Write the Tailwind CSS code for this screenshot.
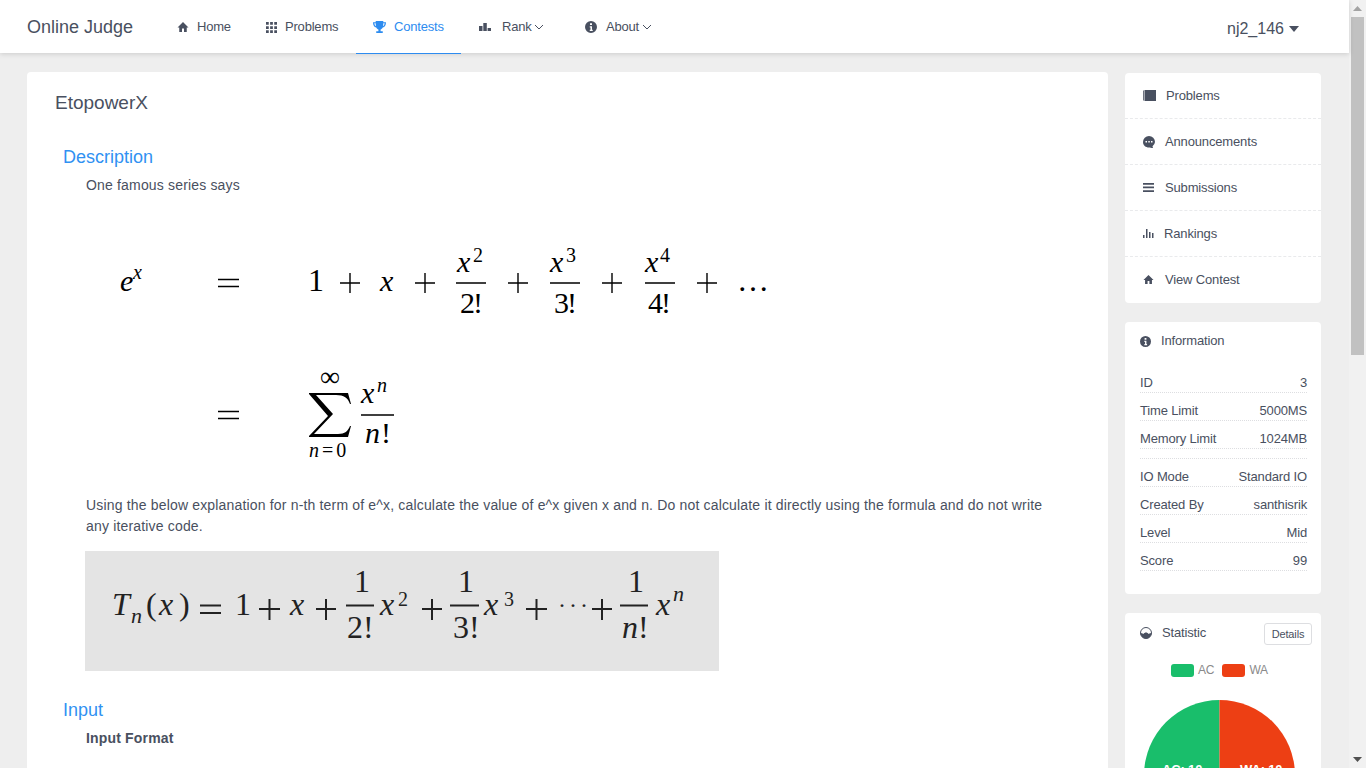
<!DOCTYPE html>
<html lang="en">
<head>
    <meta charset="UTF-8">
    <title>Online Judge</title>
    <script src="https://cdn.jsdelivr.net/npm/@tailwindcss/browser@4"></script>
</head>
<body class="bg-[#eeeeee] text-[#495060] font-['Liberation_Sans',sans-serif] text-[14px]">
<div class="flex h-[768px] w-[1366px] overflow-hidden">
    <div class="w-[1349px] shrink-0">
        <!-- Header -->
        <header class="relative flex h-[53px] items-stretch bg-white pl-[27px] shadow-[0_1px_5px_rgba(0,0,0,0.15)]">
            <div class="w-[129px] text-[18px] leading-[55px]">Online Judge</div>
            <nav class="flex h-[54px] text-[13px] tracking-[-0.2px]">
                <a class="flex w-[102px] items-center pl-[21px]">
                    <svg class="mr-[8px] h-[12px] w-[12px] fill-current" viewBox="0 0 24 24"><path d="M12 2 1 13h3.500v9H10v-7h4v7h5.500v-9H23z"/></svg>
                    <span>Home</span>
                </a>
                <a class="flex w-[98px] items-center pl-[8px]">
                    <svg class="mr-[8px] h-[11px] w-[11px] fill-current" viewBox="0 0 12 12"><path d="M0 0h3v3H0zM4.500 0h3v3h-3zM9 0h3v3H9zM0 4.500h3v3H0zM4.500 4.500h3v3h-3zM9 4.500h3v3H9zM0 9h3v3H0zM4.500 9h3v3h-3zM9 9h3v3H9z"/></svg>
                    <span>Problems</span>
                </a>
                <a class="flex w-[105px] items-center border-b border-[#2d8cf0] pl-[17px] text-[#2d8cf0]">
                    <svg class="mr-[8px] h-[14px] w-[13px] fill-current" viewBox="0 0 24 24"><path d="M5 1h14v2h5c0 5-2 9-6 10-1 2-2.500 3-4 3.500V20h4v3H6v-3h4v-3.500C8.500 16 7 15 6 13 2 12 0 8 0 3h5zM2.500 5c.3 2.500 1.200 4.500 3 5.500C5.200 9 5 7 5 5zM19 5c0 2-.2 4-.5 5.500 1.800-1 2.700-3 3-5.500z"/></svg>
                    <span>Contests</span>
                </a>
                <a class="flex w-[106px] items-center pl-[18px]">
                    <svg class="mr-[11px] h-[8px] w-[12px] fill-current" viewBox="0 0 12 8"><path d="M0 3h3.500v5H0zM4.300 0h3.500v8H4.300zM8.600 5H12v3H8.600z"/></svg>
                    <span>Rank</span>
                    <svg class="ml-[2px] h-[8px] w-[10px] fill-none stroke-current" viewBox="0 0 9 8"><path d="M.5 2 4.500 6 8.500 2"/></svg>
                </a>
                <a class="flex items-center pl-[18px]">
                    <svg class="mr-[9px] h-[12px] w-[12px] fill-current" viewBox="0 0 24 24"><path fill-rule="evenodd" d="M12 0a12 12 0 1 0 0 24 12 12 0 0 0 0-24zm-2 4.500h4V8h-4zM9.500 10.500H14v7h1.500V20h-6v-2.500H11v-4.500H9.500z"/></svg>
                    <span>About</span>
                    <svg class="ml-[3px] h-[8px] w-[10px] fill-none stroke-current" viewBox="0 0 9 8"><path d="M.5 2 4.500 6 8.500 2"/></svg>
                </a>
            </nav>
            <div class="absolute left-[1227px] top-0 flex items-center text-[16px] leading-[57px]">
                <span>nj2_146</span>
                <svg class="ml-[5px] h-[6px] w-[10px] fill-current" viewBox="0 0 10 6"><path d="M0 0h10L5 6z"/></svg>
            </div>
        </header>

        <main class="flex items-start pl-[27px] pt-[19px]">
            <!-- Problem card -->
            <section class="h-[800px] w-[1081px] shrink-0 rounded-[4px] bg-white">
                <h1 class="pl-[28px] pt-[19px] text-[19px] leading-[24px]">EtopowerX</h1>
                <h2 class="pl-[36px] pt-[30px] text-[18px] leading-[24px] text-[#3091f2]">Description</h2>
                <p class="pl-[59px] pt-[6px] leading-[21px] tracking-[0.17px]">One famous series says</p>

                <svg class="ml-[59px] mt-[5px] block h-[290px] w-[720px] fill-black font-['Liberation_Serif',serif] text-[30px]" viewBox="0 0 720 290">
                    <g font-style="italic">
                        <text x="34" y="90">e</text>
                        <text x="47" y="78" font-size="20">x</text>
                        <text x="294" y="90">x</text>
                        <text x="371" y="71">x</text>
                        <text x="464" y="71">x</text>
                        <text x="559" y="71">x</text>
                        <text x="275" y="202">x</text>
                        <text x="279" y="242">n</text>
                        <text x="291" y="191" font-size="20">n</text>
                        <text x="223" y="256" font-size="20">n</text>
                    </g>
                    <g>
                        <text x="222" y="90" font-size="32">1</text>
                        <text x="374" y="112" letter-spacing="-2">2!</text>
                        <text x="468" y="112" letter-spacing="-2">3!</text>
                        <text x="562" y="112" letter-spacing="-2">4!</text>
                        <text x="387" y="61" font-size="20">2</text>
                        <text x="480" y="61" font-size="20">3</text>
                        <text x="574" y="61" font-size="20">4</text>
                        <text x="295" y="242">!</text>
                        <text x="236" y="256" font-size="20" letter-spacing="3">=0</text>
                        <text x="234" y="185" font-size="28">∞</text>
                        <text x="651" y="90" font-size="32">…</text>
                    </g>
                    <g stroke="#000" stroke-width="1.400" fill="none">
                        <path d="M132 78.500h21M132 85.500h21M132 210.500h21M132 217.500h21"/>
                        <path d="M254 82h20M264 72v20M329 82h20M339 72v20M422 82h20M432 72v20M516 82h20M526 72v20M611 82h20M621 72v20"/>
                        <path d="M370 82h30M464 82h30M559 82h30M275 214h33"/>
                    </g>
                    <path d="M223 192H262L265 203H264C262 197 258 194 250 194H230L247 213L228 233H252C259 233 262 230 264 225H265L262 236H223V235L242 215L223 193Z"/>
                </svg>

                <p class="pl-[59px] pr-[40px] pt-[4px] leading-[21px] tracking-[0.17px]">Using the below explanation for n-th term of e^x, calculate the value of e^x given x and n. Do not calculate it directly using the formula and do not write any iterative code.</p>

                <svg class="ml-[58px] mt-[14px] block h-[120px] w-[634px] bg-[#e4e4e4] fill-[#222222] font-['Liberation_Serif',serif] text-[32px]" viewBox="0 0 634 120">
                    <g font-style="italic">
                        <text x="27" y="64">T</text>
                        <text x="46" y="72" font-size="22">n</text>
                        <text x="74" y="64">x</text>
                        <text x="205" y="64">x</text>
                        <text x="295" y="64">x</text>
                        <text x="399" y="64">x</text>
                        <text x="571" y="64">x</text>
                        <text x="588" y="50" font-size="22">n</text>
                        <text x="537" y="87">n</text>
                    </g>
                    <g>
                        <text x="61" y="64">(</text>
                        <text x="94" y="64">)</text>
                        <text x="150" y="64">1</text>
                        <text x="269" y="41">1</text>
                        <text x="373" y="41">1</text>
                        <text x="543" y="41">1</text>
                        <text x="262" y="87">2!</text>
                        <text x="368" y="87">3!</text>
                        <text x="553" y="87">!</text>
                        <text x="313" y="55" font-size="20">2</text>
                        <text x="419" y="55" font-size="20">3</text>
                        <text x="473" y="62" font-size="24" letter-spacing="3">···</text>
                    </g>
                    <g stroke="#222222" stroke-width="2" fill="none">
                        <path d="M115 54.500h21M115 62h21"/>
                        <path d="M174 58h21M184.500 48v21M231 58h20M241 48v21M337 58h20M347 48v21M441 58h21M451.500 48v21M507 58h20M517 48v21"/>
                        <path d="M261 54.500h28M365 54.500h29M535 54.500h28"/>
                    </g>
                </svg>

                <h2 class="pl-[36px] pt-[27px] text-[18px] leading-[24px] text-[#3091f2]">Input</h2>
                <p class="pl-[59px] pt-[6px] font-bold leading-[21px] tracking-[0.17px]">Input Format</p>
            </section>

            <!-- Sidebar -->
            <aside class="ml-[17px] mt-px w-[196px] shrink-0 space-y-[19px] text-[13px] tracking-[-0.15px]">
                <div class="rounded-[4px] bg-white">
                    <a class="flex h-[46px] items-center border-b border-dashed border-[#e9eaec] pl-[18px]">
                        <svg class="mr-[10px] h-[11px] w-[13px] fill-current" viewBox="0 0 13 11"><path d="M1.500 0H13v11H1.500zM0 .5h.8v10H0z"/></svg>
                        <span>Problems</span>
                    </a>
                    <a class="flex h-[46px] items-center border-b border-dashed border-[#e9eaec] pl-[18px]">
                        <svg class="mr-[10px] h-[12px] w-[12px] fill-current" viewBox="0 0 12 12"><path fill-rule="evenodd" d="M6 0a6 6 0 0 0-6 6c0 3.300 2.700 5.500 6 5.500 1 0 2 .5 4 .5l-.5-1.800A5.700 5.700 0 0 0 12 6a6 6 0 0 0-6-6zM2.500 5h1.500v1.500H2.500zM5.300 5h1.500v1.500H5.300zM8 5h1.500v1.500H8z"/></svg>
                        <span>Announcements</span>
                    </a>
                    <a class="flex h-[46px] items-center border-b border-dashed border-[#e9eaec] pl-[18px]">
                        <svg class="mr-[11px] h-[9px] w-[11px] fill-current" viewBox="0 0 11 9"><path d="M0 0h11v1.700H0zM0 3.600h11v1.700H0zM0 7.300h11V9H0z"/></svg>
                        <span>Submissions</span>
                    </a>
                    <a class="flex h-[46px] items-center border-b border-dashed border-[#e9eaec] pl-[18px]">
                        <svg class="mr-[10px] h-[9px] w-[11px] fill-current" viewBox="0 0 11 9"><path d="M0 6h1.500v3H0zM3 0h1.500v9H3zM6 3h1.500v6H6zM9 4h1.500v5H9z"/></svg>
                        <span>Rankings</span>
                    </a>
                    <a class="flex h-[46px] items-center pb-px pl-[18px]">
                        <svg class="mr-[11px] h-[11px] w-[11px] fill-current" viewBox="0 0 24 24"><path d="M12 2 1 13h3.500v9H10v-7h4v7h5.500v-9H23z"/></svg>
                        <span>View Contest</span>
                    </a>
                </div>

                <div class="h-[272px] rounded-[4px] bg-white px-[15px] pt-[10px]">
                    <div class="flex h-[18px] items-center">
                        <svg class="mr-[10px] h-[11px] w-[11px] fill-current" viewBox="0 0 24 24"><path fill-rule="evenodd" d="M12 0a12 12 0 1 0 0 24 12 12 0 0 0 0-24zm-2 4.500h4V8h-4zM9.500 10.500H14v7h1.500V20h-6v-2.500H11v-4.500H9.500z"/></svg>
                        <span>Information</span>
                    </div>
                    <div class="mt-[15px] w-[167px]">
                        <div class="flex h-[28px] items-end justify-between border-b border-dotted border-[#dddee1]"><span>ID</span><span>3</span></div>
                        <div class="flex h-[28px] items-end justify-between border-b border-dotted border-[#dddee1]"><span>Time Limit</span><span>5000MS</span></div>
                        <div class="flex h-[28px] items-end justify-between border-b border-dotted border-[#dddee1]"><span>Memory Limit</span><span>1024MB</span></div>
                        <div class="h-[10px] border-b border-dotted border-[#dddee1]"></div>
                        <div class="flex h-[28px] items-end justify-between border-b border-dotted border-[#dddee1]"><span>IO Mode</span><span>Standard IO</span></div>
                        <div class="flex h-[28px] items-end justify-between border-b border-dotted border-[#dddee1]"><span>Created By</span><span>santhisrik</span></div>
                        <div class="flex h-[28px] items-end justify-between border-b border-dotted border-[#dddee1]"><span>Level</span><span>Mid</span></div>
                        <div class="flex h-[28px] items-end justify-between border-b border-dotted border-[#dddee1]"><span>Score</span><span>99</span></div>
                    </div>
                </div>

                <div class="relative h-[300px] rounded-[4px] bg-white">
                    <div class="flex items-center justify-between pl-[15px] pr-[9px] pt-[10px]">
                        <div class="mt-px flex h-[18px] items-center self-start">
                            <svg class="mr-[10px] h-[12px] w-[12px]" viewBox="0 0 12 12"><circle cx="6" cy="6" r="5.500" fill="none" stroke="#495060"/><path fill="#495060" d="M.5 6c1 0 2 .5 3 1 1-2 4-2 5 0 1-.5 2-1 3-1a5.500 5.500 0 0 1-11 0z"/></svg>
                            <span>Statistic</span>
                        </div>
                        <button class="h-[22px] w-[48px] rounded-[3px] border border-[#dddee1] text-[11px] leading-[20px]">Details</button>
                    </div>
                    <div class="mt-[16px] flex items-center justify-center pr-[7px] text-[12px] text-[#8a8a8a]">
                        <span class="h-[13px] w-[23px] rounded-[3px] bg-[#19be6b]"></span>
                        <span class="ml-[4px]">AC</span>
                        <span class="ml-[8px] h-[13px] w-[23px] rounded-[3px] bg-[#ed3f14]"></span>
                        <span class="ml-[4px]">WA</span>
                    </div>
                    <svg class="absolute left-[18px] top-[87px] h-[160px] w-[154px] font-bold" viewBox="0 0 154 160">
                        <path fill="#19be6b" d="M76.500 0a75.500 75.500 0 0 0 0 151z" />
                        <path fill="#ed3f14" d="M76.500 0a75.500 75.500 0 0 1 0 151z" />
                        <text x="19" y="74" fill="#fff" font-size="13">AC: 10</text>
                        <text x="97" y="74" fill="#fff" font-size="13">WA: 10</text>
                    </svg>
                </div>
            </aside>
        </main>
    </div>

    <!-- Scrollbar -->
    <div class="flex h-[768px] w-[17px] shrink-0 flex-col items-center bg-[#f1f1f1]">
        <svg class="mt-[6px] h-[5px] w-[9px] fill-[#a3a3a3]" viewBox="0 0 9 5"><path d="M4.500 0 9 5H0z"/></svg>
        <div class="mt-[6px] h-[338px] w-[13px] bg-[#c1c1c1]"></div>
        <svg class="mt-auto mb-[6px] h-[5px] w-[9px] fill-[#505050]" viewBox="0 0 9 5"><path d="M0 0h9L4.500 5z"/></svg>
    </div>
</div>
</body>
</html>
